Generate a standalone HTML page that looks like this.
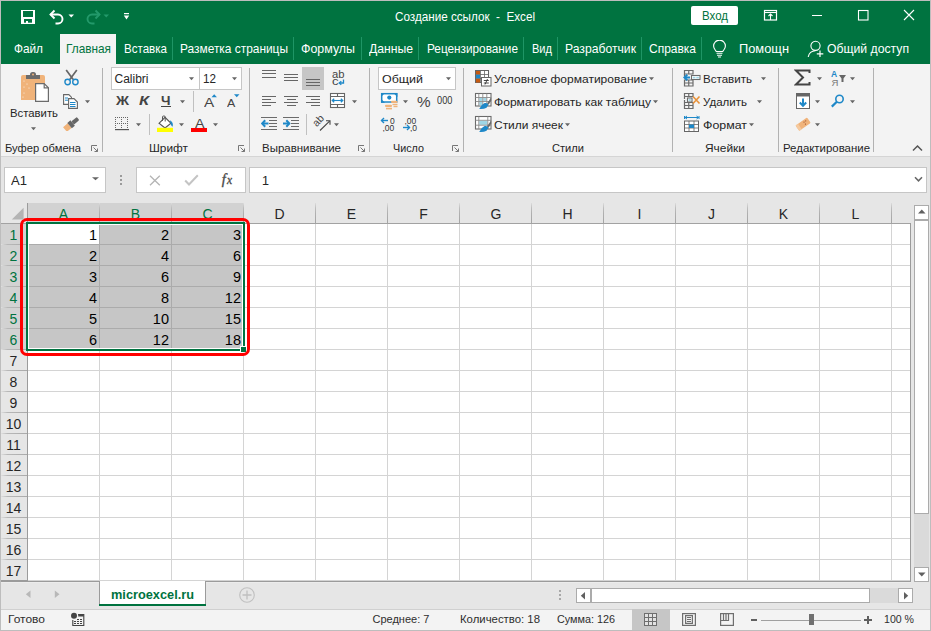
<!DOCTYPE html>
<html><head><meta charset="utf-8"><title>Excel</title>
<style>
html,body{margin:0;padding:0;}
body{width:931px;height:631px;position:relative;overflow:hidden;background:#e6e6e6;font-family:"Liberation Sans", sans-serif;}
body>div,body>span,body>svg{position:absolute;}
span{white-space:nowrap;}
</style></head><body>
<div style="left:0px;top:0px;width:931px;height:631px;background:#e6e6e6;"></div>
<div style="left:0px;top:0px;width:931px;height:1px;background:#bdbdbd;"></div>
<div style="left:1px;top:1px;width:929px;height:63px;background:#007340;"></div>
<div style="left:0px;top:0px;width:1px;height:631px;background:#bdbdbd;"></div>
<div style="left:930px;top:0px;width:1px;height:631px;background:#bdbdbd;"></div>
<div style="left:60px;top:34px;width:56px;height:30px;background:#f3f3f3;"></div>
<div style="left:1px;top:64px;width:929px;height:92px;background:#f3f3f3;"></div>
<div style="left:1px;top:156px;width:929px;height:1px;background:#d5d5d5;"></div>
<span style="left:394.50px;top:9px;font-size:13px;line-height:16px;color:#ffffff;font-weight:400;transform:scaleX(0.8985);transform-origin:0 0;">Создание ссылок&nbsp; - &nbsp;Excel</span>
<div style="left:691px;top:6px;width:47px;height:19px;background:#ffffff;border-radius:2px;"></div>
<span style="left:701.50px;top:8px;font-size:13px;line-height:16px;color:#007340;font-weight:400;transform:scaleX(0.8837);transform-origin:0 0;">Вход</span>
<span style="left:13.50px;top:41px;font-size:13px;line-height:16px;color:#ffffff;font-weight:400;transform:scaleX(0.9071);transform-origin:0 0;">Файл</span>
<span style="left:65.50px;top:41px;font-size:13px;line-height:16px;color:#007340;font-weight:400;transform:scaleX(0.9094);transform-origin:0 0;">Главная</span>
<span style="left:123.50px;top:41px;font-size:13px;line-height:16px;color:#ffffff;font-weight:400;transform:scaleX(0.8898);transform-origin:0 0;">Вставка</span>
<span style="left:179.50px;top:41px;font-size:13px;line-height:16px;color:#ffffff;font-weight:400;transform:scaleX(0.9157);transform-origin:0 0;">Разметка страницы</span>
<span style="left:300.50px;top:41px;font-size:13px;line-height:16px;color:#ffffff;font-weight:400;transform:scaleX(0.9544);transform-origin:0 0;">Формулы</span>
<span style="left:368.50px;top:41px;font-size:13px;line-height:16px;color:#ffffff;font-weight:400;transform:scaleX(0.9368);transform-origin:0 0;">Данные</span>
<span style="left:426.50px;top:41px;font-size:13px;line-height:16px;color:#ffffff;font-weight:400;transform:scaleX(0.9065);transform-origin:0 0;">Рецензирование</span>
<span style="left:531.50px;top:41px;font-size:13px;line-height:16px;color:#ffffff;font-weight:400;transform:scaleX(0.8499);transform-origin:0 0;">Вид</span>
<span style="left:564.50px;top:41px;font-size:13px;line-height:16px;color:#ffffff;font-weight:400;transform:scaleX(0.9365);transform-origin:0 0;">Разработчик</span>
<span style="left:648.50px;top:41px;font-size:13px;line-height:16px;color:#ffffff;font-weight:400;transform:scaleX(0.9216);transform-origin:0 0;">Справка</span>
<span style="left:738.50px;top:41px;font-size:13px;line-height:16px;color:#ffffff;font-weight:400;transform:scaleX(0.9877);transform-origin:0 0;">Помощн</span>
<span style="left:826.50px;top:41px;font-size:13px;line-height:16px;color:#ffffff;font-weight:400;transform:scaleX(0.9388);transform-origin:0 0;">Общий доступ</span>
<div style="left:172px;top:37px;width:1px;height:23px;background:#1f9565;"></div>
<div style="left:293px;top:37px;width:1px;height:23px;background:#1f9565;"></div>
<div style="left:361px;top:37px;width:1px;height:23px;background:#1f9565;"></div>
<div style="left:418px;top:37px;width:1px;height:23px;background:#1f9565;"></div>
<div style="left:523px;top:37px;width:1px;height:23px;background:#1f9565;"></div>
<div style="left:557px;top:37px;width:1px;height:23px;background:#1f9565;"></div>
<div style="left:641px;top:37px;width:1px;height:23px;background:#1f9565;"></div>
<div style="left:701px;top:37px;width:1px;height:23px;background:#1f9565;"></div>
<div style="left:102px;top:68px;width:1px;height:84px;background:#b2b2b2;"></div>
<div style="left:249px;top:68px;width:1px;height:84px;background:#b2b2b2;"></div>
<div style="left:369px;top:68px;width:1px;height:84px;background:#b2b2b2;"></div>
<div style="left:463px;top:68px;width:1px;height:84px;background:#b2b2b2;"></div>
<div style="left:672px;top:68px;width:1px;height:84px;background:#b2b2b2;"></div>
<div style="left:778px;top:68px;width:1px;height:84px;background:#b2b2b2;"></div>
<div style="left:873px;top:68px;width:1px;height:84px;background:#b2b2b2;"></div>
<span style="left:4.50px;top:142px;font-size:11px;line-height:13px;color:#262626;font-weight:400;transform:scaleX(1.0167);transform-origin:0 0;">Буфер обмена</span>
<span style="left:148.50px;top:142px;font-size:11px;line-height:13px;color:#262626;font-weight:400;transform:scaleX(1.0773);transform-origin:0 0;">Шрифт</span>
<span style="left:261.50px;top:142px;font-size:11px;line-height:13px;color:#262626;font-weight:400;transform:scaleX(1.0433);transform-origin:0 0;">Выравнивание</span>
<span style="left:392.50px;top:142px;font-size:11px;line-height:13px;color:#262626;font-weight:400;transform:scaleX(0.9798);transform-origin:0 0;">Число</span>
<span style="left:551.50px;top:142px;font-size:11px;line-height:13px;color:#262626;font-weight:400;transform:scaleX(1.0094);transform-origin:0 0;">Стили</span>
<span style="left:704.50px;top:142px;font-size:11px;line-height:13px;color:#262626;font-weight:400;transform:scaleX(1.0838);transform-origin:0 0;">Ячейки</span>
<span style="left:782.50px;top:142px;font-size:11px;line-height:13px;color:#262626;font-weight:400;transform:scaleX(1.0382);transform-origin:0 0;">Редактирование</span>
<span style="left:9.50px;top:106px;font-size:11.5px;line-height:14px;color:#262626;font-weight:400;transform:scaleX(0.9846);transform-origin:0 0;">Вставить</span>
<div style="left:111px;top:67px;width:89px;height:23px;box-sizing:border-box;border:1px solid #c6c6c6;background:#ffffff;"></div>
<div style="left:199px;top:67px;width:43px;height:23px;box-sizing:border-box;border:1px solid #c6c6c6;background:#ffffff;"></div>
<span style="left:114.50px;top:72px;font-size:12px;line-height:14px;color:#262626;font-weight:400;">Calibri</span>
<span style="left:202.50px;top:72px;font-size:12px;line-height:14px;color:#262626;font-weight:400;transform:scaleX(0.9731);transform-origin:0 0;">12</span>
<div style="left:378px;top:67px;width:78px;height:23px;box-sizing:border-box;border:1px solid #c6c6c6;background:#ffffff;"></div>
<span style="left:381.50px;top:72px;font-size:11.5px;line-height:14px;color:#262626;font-weight:400;transform:scaleX(1.0834);transform-origin:0 0;">Общий</span>
<span style="left:493.50px;top:73px;font-size:11px;line-height:13px;color:#262626;font-weight:400;transform:scaleX(1.0932);transform-origin:0 0;">Условное форматирование</span>
<span style="left:493.50px;top:96px;font-size:11px;line-height:13px;color:#262626;font-weight:400;transform:scaleX(1.0969);transform-origin:0 0;">Форматировать как таблицу</span>
<span style="left:493.50px;top:119px;font-size:11px;line-height:13px;color:#262626;font-weight:400;transform:scaleX(1.0869);transform-origin:0 0;">Стили ячеек</span>
<span style="left:702.50px;top:73px;font-size:11px;line-height:13px;color:#262626;font-weight:400;transform:scaleX(1.0506);transform-origin:0 0;">Вставить</span>
<span style="left:702.50px;top:96px;font-size:11px;line-height:13px;color:#262626;font-weight:400;transform:scaleX(1.0476);transform-origin:0 0;">Удалить</span>
<span style="left:702.50px;top:119px;font-size:11px;line-height:13px;color:#262626;font-weight:400;transform:scaleX(1.1259);transform-origin:0 0;">Формат</span>
<div style="left:4px;top:167px;width:102px;height:26px;box-sizing:border-box;border:1px solid #c6c6c6;background:#ffffff;"></div>
<span style="left:10.50px;top:173px;font-size:13px;line-height:16px;color:#262626;font-weight:400;transform:scaleX(1.0059);transform-origin:0 0;">A1</span>
<div style="left:136px;top:167px;width:110px;height:26px;box-sizing:border-box;border:1px solid #c6c6c6;background:#ffffff;"></div>
<div style="left:249px;top:167px;width:678px;height:26px;box-sizing:border-box;border:1px solid #c6c6c6;background:#ffffff;"></div>
<span style="left:261.50px;top:173px;font-size:13px;line-height:16px;color:#262626;font-weight:400;transform:scaleX(0.9676);transform-origin:0 0;">1</span>
<div style="left:1px;top:203px;width:910px;height:20px;background:#e6e6e6;"></div>
<div style="left:27px;top:203px;width:216px;height:20px;background:#d2d2d2;"></div>
<div style="left:1px;top:224px;width:26px;height:357px;background:#e6e6e6;"></div>
<div style="left:1px;top:224px;width:26px;height:126px;background:#d2d2d2;"></div>
<div style="left:28px;top:224px;width:882px;height:357px;background:#ffffff;"></div>
<div style="left:99px;top:224px;width:1px;height:357px;background:#d4d4d4;"></div>
<div style="left:99px;top:203px;width:1px;height:20px;background:linear-gradient(#dcdcdc, #bdbdbd 25%, #b0b0b0 50%, #a4a4a4);"></div>
<div style="left:171px;top:224px;width:1px;height:357px;background:#d4d4d4;"></div>
<div style="left:171px;top:203px;width:1px;height:20px;background:linear-gradient(#dcdcdc, #bdbdbd 25%, #b0b0b0 50%, #a4a4a4);"></div>
<div style="left:243px;top:224px;width:1px;height:357px;background:#d4d4d4;"></div>
<div style="left:243px;top:203px;width:1px;height:20px;background:linear-gradient(#dcdcdc, #bdbdbd 25%, #b0b0b0 50%, #a4a4a4);"></div>
<div style="left:315px;top:224px;width:1px;height:357px;background:#d4d4d4;"></div>
<div style="left:315px;top:203px;width:1px;height:20px;background:linear-gradient(#dcdcdc, #bdbdbd 25%, #b0b0b0 50%, #a4a4a4);"></div>
<div style="left:387px;top:224px;width:1px;height:357px;background:#d4d4d4;"></div>
<div style="left:387px;top:203px;width:1px;height:20px;background:linear-gradient(#dcdcdc, #bdbdbd 25%, #b0b0b0 50%, #a4a4a4);"></div>
<div style="left:459px;top:224px;width:1px;height:357px;background:#d4d4d4;"></div>
<div style="left:459px;top:203px;width:1px;height:20px;background:linear-gradient(#dcdcdc, #bdbdbd 25%, #b0b0b0 50%, #a4a4a4);"></div>
<div style="left:531px;top:224px;width:1px;height:357px;background:#d4d4d4;"></div>
<div style="left:531px;top:203px;width:1px;height:20px;background:linear-gradient(#dcdcdc, #bdbdbd 25%, #b0b0b0 50%, #a4a4a4);"></div>
<div style="left:603px;top:224px;width:1px;height:357px;background:#d4d4d4;"></div>
<div style="left:603px;top:203px;width:1px;height:20px;background:linear-gradient(#dcdcdc, #bdbdbd 25%, #b0b0b0 50%, #a4a4a4);"></div>
<div style="left:675px;top:224px;width:1px;height:357px;background:#d4d4d4;"></div>
<div style="left:675px;top:203px;width:1px;height:20px;background:linear-gradient(#dcdcdc, #bdbdbd 25%, #b0b0b0 50%, #a4a4a4);"></div>
<div style="left:747px;top:224px;width:1px;height:357px;background:#d4d4d4;"></div>
<div style="left:747px;top:203px;width:1px;height:20px;background:linear-gradient(#dcdcdc, #bdbdbd 25%, #b0b0b0 50%, #a4a4a4);"></div>
<div style="left:819px;top:224px;width:1px;height:357px;background:#d4d4d4;"></div>
<div style="left:819px;top:203px;width:1px;height:20px;background:linear-gradient(#dcdcdc, #bdbdbd 25%, #b0b0b0 50%, #a4a4a4);"></div>
<div style="left:891px;top:224px;width:1px;height:357px;background:#d4d4d4;"></div>
<div style="left:891px;top:203px;width:1px;height:20px;background:linear-gradient(#dcdcdc, #bdbdbd 25%, #b0b0b0 50%, #a4a4a4);"></div>
<div style="left:28px;top:244px;width:882px;height:1px;background:#d4d4d4;"></div>
<div style="left:1px;top:244px;width:26px;height:1px;background:linear-gradient(to right, #e0e0e0, #b8b8b8 25%, #aaaaaa);"></div>
<div style="left:28px;top:265px;width:882px;height:1px;background:#d4d4d4;"></div>
<div style="left:1px;top:265px;width:26px;height:1px;background:linear-gradient(to right, #e0e0e0, #b8b8b8 25%, #aaaaaa);"></div>
<div style="left:28px;top:286px;width:882px;height:1px;background:#d4d4d4;"></div>
<div style="left:1px;top:286px;width:26px;height:1px;background:linear-gradient(to right, #e0e0e0, #b8b8b8 25%, #aaaaaa);"></div>
<div style="left:28px;top:307px;width:882px;height:1px;background:#d4d4d4;"></div>
<div style="left:1px;top:307px;width:26px;height:1px;background:linear-gradient(to right, #e0e0e0, #b8b8b8 25%, #aaaaaa);"></div>
<div style="left:28px;top:328px;width:882px;height:1px;background:#d4d4d4;"></div>
<div style="left:1px;top:328px;width:26px;height:1px;background:linear-gradient(to right, #e0e0e0, #b8b8b8 25%, #aaaaaa);"></div>
<div style="left:28px;top:349px;width:882px;height:1px;background:#d4d4d4;"></div>
<div style="left:1px;top:349px;width:26px;height:1px;background:linear-gradient(to right, #e0e0e0, #b8b8b8 25%, #aaaaaa);"></div>
<div style="left:28px;top:370px;width:882px;height:1px;background:#d4d4d4;"></div>
<div style="left:1px;top:370px;width:26px;height:1px;background:linear-gradient(to right, #e0e0e0, #b8b8b8 25%, #aaaaaa);"></div>
<div style="left:28px;top:391px;width:882px;height:1px;background:#d4d4d4;"></div>
<div style="left:1px;top:391px;width:26px;height:1px;background:linear-gradient(to right, #e0e0e0, #b8b8b8 25%, #aaaaaa);"></div>
<div style="left:28px;top:412px;width:882px;height:1px;background:#d4d4d4;"></div>
<div style="left:1px;top:412px;width:26px;height:1px;background:linear-gradient(to right, #e0e0e0, #b8b8b8 25%, #aaaaaa);"></div>
<div style="left:28px;top:433px;width:882px;height:1px;background:#d4d4d4;"></div>
<div style="left:1px;top:433px;width:26px;height:1px;background:linear-gradient(to right, #e0e0e0, #b8b8b8 25%, #aaaaaa);"></div>
<div style="left:28px;top:454px;width:882px;height:1px;background:#d4d4d4;"></div>
<div style="left:1px;top:454px;width:26px;height:1px;background:linear-gradient(to right, #e0e0e0, #b8b8b8 25%, #aaaaaa);"></div>
<div style="left:28px;top:475px;width:882px;height:1px;background:#d4d4d4;"></div>
<div style="left:1px;top:475px;width:26px;height:1px;background:linear-gradient(to right, #e0e0e0, #b8b8b8 25%, #aaaaaa);"></div>
<div style="left:28px;top:496px;width:882px;height:1px;background:#d4d4d4;"></div>
<div style="left:1px;top:496px;width:26px;height:1px;background:linear-gradient(to right, #e0e0e0, #b8b8b8 25%, #aaaaaa);"></div>
<div style="left:28px;top:517px;width:882px;height:1px;background:#d4d4d4;"></div>
<div style="left:1px;top:517px;width:26px;height:1px;background:linear-gradient(to right, #e0e0e0, #b8b8b8 25%, #aaaaaa);"></div>
<div style="left:28px;top:538px;width:882px;height:1px;background:#d4d4d4;"></div>
<div style="left:1px;top:538px;width:26px;height:1px;background:linear-gradient(to right, #e0e0e0, #b8b8b8 25%, #aaaaaa);"></div>
<div style="left:28px;top:559px;width:882px;height:1px;background:#d4d4d4;"></div>
<div style="left:1px;top:559px;width:26px;height:1px;background:linear-gradient(to right, #e0e0e0, #b8b8b8 25%, #aaaaaa);"></div>
<div style="left:28px;top:580px;width:882px;height:1px;background:#d4d4d4;"></div>
<div style="left:1px;top:580px;width:26px;height:1px;background:linear-gradient(to right, #e0e0e0, #b8b8b8 25%, #aaaaaa);"></div>
<div style="left:1px;top:223px;width:910px;height:1px;background:#a2a2a2;"></div>
<div style="left:27px;top:203px;width:1px;height:378px;background:#9b9b9b;"></div>
<div style="left:1px;top:580px;width:27px;height:1px;background:#9b9b9b;"></div>
<div style="left:910px;top:223px;width:1px;height:359px;background:#9b9b9b;"></div>
<div style="left:26px;top:222px;width:219px;height:129px;background:#ffffff;"></div>
<div style="left:29px;top:225px;width:213px;height:123px;background:#c6c6c6;"></div>
<div style="left:29px;top:224px;width:70px;height:20px;background:#ffffff;"></div>
<div style="left:29px;top:244px;width:213px;height:1px;background:#ababab;"></div>
<div style="left:29px;top:265px;width:213px;height:1px;background:#ababab;"></div>
<div style="left:29px;top:286px;width:213px;height:1px;background:#ababab;"></div>
<div style="left:29px;top:307px;width:213px;height:1px;background:#ababab;"></div>
<div style="left:29px;top:328px;width:213px;height:1px;background:#ababab;"></div>
<div style="left:99px;top:225px;width:1px;height:123px;background:#ababab;"></div>
<div style="left:171px;top:225px;width:1px;height:123px;background:#ababab;"></div>
<span style="left:58.50px;top:206px;font-size:14px;line-height:17px;color:#007340;font-weight:400;width:10px;text-align:center;">A</span>
<span style="left:130.50px;top:206px;font-size:14px;line-height:17px;color:#007340;font-weight:400;width:10px;text-align:center;">B</span>
<span style="left:202.50px;top:206px;font-size:14px;line-height:17px;color:#007340;font-weight:400;width:10px;text-align:center;">C</span>
<span style="left:274.50px;top:206px;font-size:14px;line-height:17px;color:#262626;font-weight:400;width:10px;text-align:center;">D</span>
<span style="left:346.50px;top:206px;font-size:14px;line-height:17px;color:#262626;font-weight:400;width:10px;text-align:center;">E</span>
<span style="left:418.50px;top:206px;font-size:14px;line-height:17px;color:#262626;font-weight:400;width:10px;text-align:center;">F</span>
<span style="left:490.50px;top:206px;font-size:14px;line-height:17px;color:#262626;font-weight:400;width:10px;text-align:center;">G</span>
<span style="left:562.50px;top:206px;font-size:14px;line-height:17px;color:#262626;font-weight:400;width:10px;text-align:center;">H</span>
<span style="left:634.50px;top:206px;font-size:14px;line-height:17px;color:#262626;font-weight:400;width:10px;text-align:center;">I</span>
<span style="left:706.50px;top:206px;font-size:14px;line-height:17px;color:#262626;font-weight:400;width:10px;text-align:center;">J</span>
<span style="left:778.50px;top:206px;font-size:14px;line-height:17px;color:#262626;font-weight:400;width:10px;text-align:center;">K</span>
<span style="left:850.50px;top:206px;font-size:14px;line-height:17px;color:#262626;font-weight:400;width:10px;text-align:center;">L</span>
<span style="left:9.50px;top:227px;font-size:14px;line-height:17px;color:#007340;font-weight:400;width:8px;text-align:center;">1</span>
<span style="left:9.50px;top:248px;font-size:14px;line-height:17px;color:#007340;font-weight:400;width:8px;text-align:center;">2</span>
<span style="left:9.50px;top:269px;font-size:14px;line-height:17px;color:#007340;font-weight:400;width:8px;text-align:center;">3</span>
<span style="left:9.50px;top:290px;font-size:14px;line-height:17px;color:#007340;font-weight:400;width:8px;text-align:center;">4</span>
<span style="left:9.50px;top:311px;font-size:14px;line-height:17px;color:#007340;font-weight:400;width:8px;text-align:center;">5</span>
<span style="left:9.50px;top:332px;font-size:14px;line-height:17px;color:#007340;font-weight:400;width:8px;text-align:center;">6</span>
<span style="left:9.50px;top:353px;font-size:14px;line-height:17px;color:#262626;font-weight:400;width:8px;text-align:center;">7</span>
<span style="left:9.50px;top:374px;font-size:14px;line-height:17px;color:#262626;font-weight:400;width:8px;text-align:center;">8</span>
<span style="left:9.50px;top:395px;font-size:14px;line-height:17px;color:#262626;font-weight:400;width:8px;text-align:center;">9</span>
<span style="left:5.50px;top:416px;font-size:14px;line-height:17px;color:#262626;font-weight:400;width:16px;text-align:center;">10</span>
<span style="left:5.50px;top:437px;font-size:14px;line-height:17px;color:#262626;font-weight:400;width:16px;text-align:center;">11</span>
<span style="left:5.50px;top:458px;font-size:14px;line-height:17px;color:#262626;font-weight:400;width:16px;text-align:center;">12</span>
<span style="left:5.50px;top:479px;font-size:14px;line-height:17px;color:#262626;font-weight:400;width:16px;text-align:center;">13</span>
<span style="left:5.50px;top:500px;font-size:14px;line-height:17px;color:#262626;font-weight:400;width:16px;text-align:center;">14</span>
<span style="left:5.50px;top:521px;font-size:14px;line-height:17px;color:#262626;font-weight:400;width:16px;text-align:center;">15</span>
<span style="left:5.50px;top:542px;font-size:14px;line-height:17px;color:#262626;font-weight:400;width:16px;text-align:center;">16</span>
<span style="left:5.50px;top:563px;font-size:14px;line-height:17px;color:#262626;font-weight:400;width:16px;text-align:center;">17</span>
<span style="left:67.00px;top:227px;font-size:14.5px;line-height:17px;color:#000000;font-weight:400;width:30px;text-align:right;">1</span>
<span style="left:139.00px;top:227px;font-size:14.5px;line-height:17px;color:#000000;font-weight:400;width:30px;text-align:right;">2</span>
<span style="left:211.00px;top:227px;font-size:14.5px;line-height:17px;color:#000000;font-weight:400;width:30px;text-align:right;">3</span>
<span style="left:67.00px;top:248px;font-size:14.5px;line-height:17px;color:#000000;font-weight:400;width:30px;text-align:right;">2</span>
<span style="left:139.00px;top:248px;font-size:14.5px;line-height:17px;color:#000000;font-weight:400;width:30px;text-align:right;">4</span>
<span style="left:211.00px;top:248px;font-size:14.5px;line-height:17px;color:#000000;font-weight:400;width:30px;text-align:right;">6</span>
<span style="left:67.00px;top:269px;font-size:14.5px;line-height:17px;color:#000000;font-weight:400;width:30px;text-align:right;">3</span>
<span style="left:139.00px;top:269px;font-size:14.5px;line-height:17px;color:#000000;font-weight:400;width:30px;text-align:right;">6</span>
<span style="left:211.00px;top:269px;font-size:14.5px;line-height:17px;color:#000000;font-weight:400;width:30px;text-align:right;">9</span>
<span style="left:67.00px;top:290px;font-size:14.5px;line-height:17px;color:#000000;font-weight:400;width:30px;text-align:right;">4</span>
<span style="left:139.00px;top:290px;font-size:14.5px;line-height:17px;color:#000000;font-weight:400;width:30px;text-align:right;">8</span>
<span style="left:211.00px;top:290px;font-size:14.5px;line-height:17px;color:#000000;font-weight:400;width:30px;text-align:right;">12</span>
<span style="left:67.00px;top:311px;font-size:14.5px;line-height:17px;color:#000000;font-weight:400;width:30px;text-align:right;">5</span>
<span style="left:139.00px;top:311px;font-size:14.5px;line-height:17px;color:#000000;font-weight:400;width:30px;text-align:right;">10</span>
<span style="left:211.00px;top:311px;font-size:14.5px;line-height:17px;color:#000000;font-weight:400;width:30px;text-align:right;">15</span>
<span style="left:67.00px;top:332px;font-size:14.5px;line-height:17px;color:#000000;font-weight:400;width:30px;text-align:right;">6</span>
<span style="left:139.00px;top:332px;font-size:14.5px;line-height:17px;color:#000000;font-weight:400;width:30px;text-align:right;">12</span>
<span style="left:211.00px;top:332px;font-size:14.5px;line-height:17px;color:#000000;font-weight:400;width:30px;text-align:right;">18</span>
<div style="left:26px;top:222px;width:219px;height:129px;box-sizing:border-box;border:2px solid #007340;background:transparent;"></div>
<div style="left:240px;top:346px;width:7px;height:7px;background:#ffffff;"></div>
<div style="left:241px;top:347px;width:5px;height:5px;background:#007340;"></div>
<div style="left:20px;top:218px;width:230px;height:138px;box-sizing:border-box;border:3px solid #ff0000;background:transparent;border-radius:7px;"></div>
<div style="left:911px;top:203px;width:19px;height:378px;background:#e6e6e6;"></div>
<div style="left:914px;top:205px;width:15px;height:15px;box-sizing:border-box;border:1px solid #ababab;background:#ffffff;"></div>
<div style="left:914px;top:220px;width:15px;height:294px;box-sizing:border-box;border:1px solid #ababab;background:#ffffff;"></div>
<div style="left:914px;top:514px;width:15px;height:53px;background:#dadada;"></div>
<div style="left:914px;top:567px;width:15px;height:15px;box-sizing:border-box;border:1px solid #ababab;background:#ffffff;"></div>
<div style="left:1px;top:582px;width:929px;height:27px;background:#e6e6e6;"></div>
<div style="left:1px;top:581px;width:910px;height:1px;background:#9b9b9b;"></div>
<div style="left:1px;top:582px;width:910px;height:1px;background:#ececec;"></div>
<div style="left:1px;top:609px;width:929px;height:1px;background:#d0d0d0;"></div>
<div style="left:99px;top:581px;width:107px;height:24px;background:#ffffff;border-left:1px solid #9b9b9b;border-right:1px solid #9b9b9b;box-sizing:border-box;"></div>
<div style="left:99px;top:604px;width:107px;height:2px;background:#007340;"></div>
<span style="left:110.50px;top:587px;font-size:13.5px;line-height:16px;color:#007340;font-weight:700;transform:scaleX(0.9454);transform-origin:0 0;">microexcel.ru</span>
<div style="left:576px;top:588px;width:15px;height:15px;box-sizing:border-box;border:1px solid #ababab;background:#ffffff;"></div>
<div style="left:591px;top:588px;width:279px;height:15px;box-sizing:border-box;border:1px solid #ababab;background:#ffffff;"></div>
<div style="left:870px;top:588px;width:28px;height:15px;background:#dadada;"></div>
<div style="left:898px;top:588px;width:15px;height:15px;box-sizing:border-box;border:1px solid #ababab;background:#ffffff;"></div>
<div style="left:1px;top:610px;width:929px;height:20px;background:#f3f3f3;"></div>
<div style="left:0px;top:630px;width:931px;height:1px;background:#bdbdbd;"></div>
<span style="left:7.50px;top:613px;font-size:11px;line-height:13px;color:#2e2e2e;font-weight:400;transform:scaleX(1.0892);transform-origin:0 0;">Готово</span>
<span style="left:372.50px;top:613px;font-size:11px;line-height:13px;color:#2e2e2e;font-weight:400;">Среднее: 7</span>
<span style="left:459.50px;top:613px;font-size:11px;line-height:13px;color:#2e2e2e;font-weight:400;transform:scaleX(1.0333);transform-origin:0 0;">Количество: 18</span>
<span style="left:556.50px;top:613px;font-size:11px;line-height:13px;color:#2e2e2e;font-weight:400;transform:scaleX(0.9825);transform-origin:0 0;">Сумма: 126</span>
<span style="left:883.50px;top:613px;font-size:11px;line-height:13px;color:#2e2e2e;font-weight:400;transform:scaleX(0.9614);transform-origin:0 0;">100 %</span>
<div style="left:632px;top:609px;width:38px;height:21px;background:#c6c6c6;"></div>
<svg style="left:21px;top:10px;" width="14" height="14" viewBox="0 0 14 14"><rect x="0" y="0" width="14" height="14" fill="#ffffff"/><rect x="2" y="1" width="10" height="6" fill="#007340"/><rect x="3" y="9" width="8" height="3.7" fill="#007340"/><rect x="5" y="11" width="2" height="2" fill="#ffffff"/></svg>
<svg style="left:48px;top:9px;" width="18" height="16" viewBox="0 0 18 16"><path d="M2.5 5.5 H10 A4.5 4.5 0 0 1 10 14.5 H7.5" fill="none" stroke="#ffffff" stroke-width="1.9"/><path d="M6.5 1.5 L2.5 5.5 L6.5 9.5" fill="none" stroke="#ffffff" stroke-width="1.9"/></svg>
<svg style="left:68px;top:14px;" width="7" height="4" viewBox="0 0 7 4"><path d="M0.5 0.5 H6 L3.25 3.5 Z" fill="#ffffff"/></svg>
<svg style="left:84px;top:9px;" width="18" height="16" viewBox="0 0 18 16"><path d="M15.5 5.5 H8 A4.5 4.5 0 0 0 8 14.5 H10.5" fill="none" stroke="#23996a" stroke-width="1.9"/><path d="M11.5 1.5 L15.5 5.5 L11.5 9.5" fill="none" stroke="#23996a" stroke-width="1.9"/></svg>
<svg style="left:103px;top:14px;" width="7" height="4" viewBox="0 0 7 4"><path d="M0.5 0.5 H6 L3.25 3.5 Z" fill="#23996a"/></svg>
<svg style="left:123px;top:12px;" width="7" height="9" viewBox="0 0 7 9"><rect x="1" y="1" width="5" height="1.2" fill="#ffffff"/><path d="M0.8 3.6 H6.2 L3.5 7.4 Z" fill="#ffffff"/></svg>
<svg style="left:763px;top:9px;" width="15" height="12" viewBox="0 0 15 12"><rect x="1.5" y="1.5" width="12" height="9.5" fill="none" stroke="#ffffff" stroke-width="1.2"/><path d="M1.5 3.5 H13.5" stroke="#ffffff" stroke-width="1.1"/><path d="M7.5 5 V11" stroke="#ffffff" stroke-width="1.1"/><path d="M5.5 7 L7.5 5 L9.5 7" fill="none" stroke="#ffffff" stroke-width="1.1"/></svg>
<div style="left:812px;top:15px;width:10px;height:1px;background:#ffffff;"></div>
<svg style="left:857px;top:9px;" width="12" height="12" viewBox="0 0 12 12"><rect x="1.5" y="1.5" width="9.5" height="9.5" fill="none" stroke="#ffffff" stroke-width="1.1"/></svg>
<svg style="left:903px;top:9px;" width="12" height="12" viewBox="0 0 12 12"><path d="M1 1 L11 11 M11 1 L1 11" stroke="#ffffff" stroke-width="1.1"/></svg>
<svg style="left:712px;top:40px;" width="15" height="18" viewBox="0 0 15 18"><path d="M4.2 11.5 C3 9.5 1.6 8.5 1.6 6 A5.9 5.9 0 0 1 13.4 6 C13.4 8.5 12 9.5 10.8 11.5 Z" fill="none" stroke="#ffffff" stroke-width="1.1"/><path d="M4.5 13.2 H10.5 M5 15.2 H10 M6 17 H9" stroke="#ffffff" stroke-width="1.1"/></svg>
<svg style="left:807px;top:40px;" width="18" height="18" viewBox="0 0 18 18"><circle cx="8.5" cy="5.8" r="4.6" fill="none" stroke="#ffffff" stroke-width="1.1"/><path d="M1.2 17 C2 13 4.5 11 8.5 10.8" fill="none" stroke="#ffffff" stroke-width="1.1"/><path d="M13 10.5 V17 M9.8 13.8 H16.3" stroke="#ffffff" stroke-width="1.2"/></svg>
<svg style="left:20px;top:71px;" width="31" height="32" viewBox="0 0 31 32"><path d="M1 6 Q1 4 3 4 H23 Q25 4 25 6 V29 H1 Z" fill="#f0b37a"/><path d="M6 4 H20 V7.5 Q20 8 19.5 8 H6.5 Q6 8 6 7.5 Z" fill="#6b6b6b"/><rect x="10" y="1" width="6" height="5" rx="2.5" fill="#6b6b6b"/><circle cx="13" cy="3.5" r="1" fill="#f0b37a"/><path d="M15.6 12.6 H24.2 L28.4 16.8 V30.4 H15.6 Z" fill="#ffffff" stroke="#6b6b6b" stroke-width="1.2"/><path d="M24.2 12.6 V16.8 H28.4" fill="none" stroke="#6b6b6b" stroke-width="1.2"/><circle cx="4" cy="10" r="0.5" fill="#fff"/><circle cx="7" cy="13" r="0.5" fill="#fff"/><circle cx="4" cy="16" r="0.5" fill="#fff"/><circle cx="9" cy="17" r="0.5" fill="#fff"/><circle cx="4" cy="22" r="0.5" fill="#fff"/><circle cx="3" cy="26" r="0.5" fill="#fff"/></svg>
<svg style="left:31px;top:127px;" width="5" height="4" viewBox="0 0 5 4"><path d="M0 0.3 H5 L2.5 3.2 Z" fill="#666666"/></svg>
<svg style="left:63px;top:69px;" width="17" height="17" viewBox="0 0 17 17"><path d="M3.2 1 L10.2 10.5 M13.8 1 L6.8 10.5" stroke="#666666" stroke-width="1.7"/><circle cx="4.6" cy="13" r="2.7" fill="none" stroke="#1e88c8" stroke-width="1.4"/><circle cx="12.4" cy="13" r="2.7" fill="none" stroke="#1e88c8" stroke-width="1.4"/></svg>
<svg style="left:62px;top:93px;" width="17" height="16" viewBox="0 0 17 16"><path d="M1.6 1.6 H6.8 L9.4 4.2 V11.4 H1.6 Z" fill="#fff" stroke="#666666" stroke-width="1.1"/><path d="M6.6 5.6 H12 L15.4 9 V15.4 H6.6 Z" fill="#fff" stroke="#666666" stroke-width="1.1"/><path d="M3 5 H6 M3 7.2 H6 M8 9.5 H13.5 M8 11.5 H13.5 M8 13.5 H13.5" stroke="#1e88c8" stroke-width="1"/></svg>
<svg style="left:85px;top:100px;" width="5" height="4" viewBox="0 0 5 4"><path d="M0 0.3 H5 L2.5 3.2 Z" fill="#666666"/></svg>
<svg style="left:63px;top:116px;" width="17" height="16" viewBox="0 0 17 16"><g transform="rotate(-40 8.5 8)"><path d="M0 5 H6 V11 H2 Q0 11 0 9 Z" fill="#f0b37a"/><rect x="6" y="4.5" width="4" height="7" fill="#666666"/><rect x="10" y="6" width="7" height="4" rx="1" fill="#666666"/></g></svg>
<span style="left:115.50px;top:94px;font-size:12.5px;line-height:15px;color:#444444;font-weight:700;transform:scaleX(1.1492);transform-origin:0 0;">Ж</span>
<span style="left:138.50px;top:94px;font-size:12.5px;line-height:15px;color:#444444;font-weight:700;transform:scaleX(1.3088);transform-origin:0 0;font-style:italic;">К</span>
<span style="left:161.00px;top:94px;font-size:12.5px;line-height:15px;color:#444444;font-weight:700;transform:scaleX(1.0799);transform-origin:0 0;">Ч</span>
<div style="left:161px;top:106px;width:10px;height:1px;background:#444444;"></div>
<svg style="left:180px;top:100px;" width="5" height="4" viewBox="0 0 5 4"><path d="M0 0.3 H5 L2.5 3.2 Z" fill="#666666"/></svg>
<div style="left:193px;top:91px;width:1px;height:21px;background:#c0c0c0;"></div>
<span style="left:204.00px;top:96px;font-size:12.5px;line-height:15px;color:#444444;font-weight:400;transform:scaleX(1.2225);transform-origin:0 0;">A</span>
<svg style="left:211px;top:94px;" width="7" height="4" viewBox="0 0 7 4"><path d="M0.5 3.2 L3.2 0.3 L5.9 3.2 Z" fill="#1e88c8"/></svg>
<span style="left:226.50px;top:97px;font-size:10.5px;line-height:13px;color:#444444;font-weight:400;transform:scaleX(1.1831);transform-origin:0 0;">A</span>
<svg style="left:234px;top:94px;" width="6" height="4" viewBox="0 0 6 4"><path d="M0 0.3 H5.5 L2.75 3.2 Z" fill="#1e88c8"/></svg>
<svg style="left:114px;top:116px;" width="15" height="15" viewBox="0 0 15 15"><rect x="1" y="1" width="1" height="1" fill="#666"/><rect x="1" y="3" width="1" height="1" fill="#666"/><rect x="1" y="5" width="1" height="1" fill="#666"/><rect x="1" y="7" width="1" height="1" fill="#666"/><rect x="1" y="9" width="1" height="1" fill="#666"/><rect x="1" y="11" width="1" height="1" fill="#666"/><rect x="3" y="1" width="1" height="1" fill="#666"/><rect x="3" y="7" width="1" height="1" fill="#666"/><rect x="5" y="1" width="1" height="1" fill="#666"/><rect x="5" y="7" width="1" height="1" fill="#666"/><rect x="7" y="1" width="1" height="1" fill="#666"/><rect x="7" y="3" width="1" height="1" fill="#666"/><rect x="7" y="5" width="1" height="1" fill="#666"/><rect x="7" y="7" width="1" height="1" fill="#666"/><rect x="7" y="9" width="1" height="1" fill="#666"/><rect x="7" y="11" width="1" height="1" fill="#666"/><rect x="9" y="1" width="1" height="1" fill="#666"/><rect x="9" y="7" width="1" height="1" fill="#666"/><rect x="11" y="1" width="1" height="1" fill="#666"/><rect x="11" y="7" width="1" height="1" fill="#666"/><rect x="13" y="1" width="1" height="1" fill="#666"/><rect x="13" y="3" width="1" height="1" fill="#666"/><rect x="13" y="5" width="1" height="1" fill="#666"/><rect x="13" y="7" width="1" height="1" fill="#666"/><rect x="13" y="9" width="1" height="1" fill="#666"/><rect x="13" y="11" width="1" height="1" fill="#666"/><rect x="1" y="13" width="14" height="1.2" fill="#555"/></svg>
<svg style="left:136px;top:123px;" width="5" height="4" viewBox="0 0 5 4"><path d="M0 0.3 H5 L2.5 3.2 Z" fill="#666666"/></svg>
<div style="left:149px;top:114px;width:1px;height:21px;background:#c0c0c0;"></div>
<svg style="left:157px;top:115px;" width="17" height="18" viewBox="0 0 17 18"><path d="M2 8.3 L8 2.3 L14 8.3 L8 13 Z" fill="#fff" stroke="#555" stroke-width="1.1"/><path d="M5.5 6 V2 Q5.5 1 6.5 1 H7.2 Q8.2 1 8.2 2 V6.5" fill="none" stroke="#555" stroke-width="1"/><path d="M13 5.2 Q16.8 7.5 15.6 11.8 Q13.4 10.5 13 5.2 Z" fill="#1e88c8"/><rect x="0" y="12.8" width="16" height="4.2" fill="#ffff00"/></svg>
<svg style="left:179px;top:123px;" width="5" height="4" viewBox="0 0 5 4"><path d="M0 0.3 H5 L2.5 3.2 Z" fill="#666666"/></svg>
<span style="left:194.50px;top:116px;font-size:13px;line-height:16px;color:#444444;font-weight:400;transform:scaleX(1.0955);transform-origin:0 0;">A</span>
<div style="left:191px;top:128px;width:16px;height:4px;background:#ff0000;"></div>
<svg style="left:213px;top:123px;" width="5" height="4" viewBox="0 0 5 4"><path d="M0 0.3 H5 L2.5 3.2 Z" fill="#666666"/></svg>
<svg style="left:189px;top:77px;" width="5" height="4" viewBox="0 0 5 4"><path d="M0 0.3 H5 L2.5 3.2 Z" fill="#666666"/></svg>
<svg style="left:232px;top:77px;" width="5" height="4" viewBox="0 0 5 4"><path d="M0 0.3 H5 L2.5 3.2 Z" fill="#666666"/></svg>
<svg style="left:446px;top:77px;" width="5" height="4" viewBox="0 0 5 4"><path d="M0 0.3 H5 L2.5 3.2 Z" fill="#666666"/></svg>
<div style="left:262px;top:70px;width:14px;height:1px;background:#666666;"></div>
<div style="left:262px;top:73px;width:14px;height:1px;background:#666666;"></div>
<div style="left:262px;top:77px;width:14px;height:1px;background:#666666;"></div>
<div style="left:284px;top:74px;width:14px;height:1px;background:#666666;"></div>
<div style="left:284px;top:77px;width:14px;height:1px;background:#666666;"></div>
<div style="left:284px;top:80px;width:14px;height:1px;background:#666666;"></div>
<div style="left:302px;top:67px;width:22px;height:23px;background:#c6c6c6;"></div>
<div style="left:306px;top:79px;width:14px;height:1px;background:#666666;"></div>
<div style="left:306px;top:82px;width:14px;height:1px;background:#666666;"></div>
<div style="left:306px;top:85px;width:14px;height:1px;background:#666666;"></div>
<span style="left:331.50px;top:67px;font-size:11.5px;line-height:14px;color:#444444;font-weight:400;transform:scaleX(0.9768);transform-origin:0 0;">ab</span>
<span style="left:331.50px;top:74px;font-size:11.5px;line-height:14px;color:#444444;font-weight:400;transform:scaleX(1.1304);transform-origin:0 0;">c</span>
<svg style="left:338px;top:79px;" width="7" height="7" viewBox="0 0 7 7"><path d="M5.5 0.5 V4 H1.8" fill="none" stroke="#1e88c8" stroke-width="1.3"/><path d="M3.3 2.3 L1.2 4 L3.3 5.7" fill="none" stroke="#1e88c8" stroke-width="1.3"/></svg>
<div style="left:262px;top:96px;width:14px;height:1px;background:#666666;"></div>
<div style="left:262px;top:99px;width:9px;height:1px;background:#666666;"></div>
<div style="left:262px;top:102px;width:14px;height:1px;background:#666666;"></div>
<div style="left:262px;top:105px;width:9px;height:1px;background:#666666;"></div>
<div style="left:284px;top:96px;width:14px;height:1px;background:#666666;"></div>
<div style="left:286.5px;top:99px;width:9.0px;height:1px;background:#666666;"></div>
<div style="left:284px;top:102px;width:14px;height:1px;background:#666666;"></div>
<div style="left:286.5px;top:105px;width:9.0px;height:1px;background:#666666;"></div>
<div style="left:306px;top:96px;width:14px;height:1px;background:#666666;"></div>
<div style="left:311px;top:99px;width:9px;height:1px;background:#666666;"></div>
<div style="left:306px;top:102px;width:14px;height:1px;background:#666666;"></div>
<div style="left:311px;top:105px;width:9px;height:1px;background:#666666;"></div>
<svg style="left:329px;top:92px;" width="17" height="17" viewBox="0 0 17 17"><rect x="1.5" y="1.5" width="14" height="14" fill="#fff" stroke="#666666" stroke-width="1.1"/><path d="M1.5 4.5 H15.5 M1.5 12.5 H15.5 M8.5 1.5 V4.5 M8.5 12.5 V15.5" stroke="#666666" stroke-width="1.1"/><path d="M3.5 8.5 H13.5" stroke="#1e88c8" stroke-width="1.1"/><path d="M5.2 6.8 L3.3 8.5 L5.2 10.2 M11.8 6.8 L13.7 8.5 L11.8 10.2" fill="none" stroke="#1e88c8" stroke-width="1.3"/></svg>
<svg style="left:352px;top:100px;" width="5" height="4" viewBox="0 0 5 4"><path d="M0 0.3 H5 L2.5 3.2 Z" fill="#666666"/></svg>
<div style="left:261px;top:117px;width:16px;height:1px;background:#6b6b6b;"></div>
<div style="left:261px;top:129px;width:16px;height:1px;background:#6b6b6b;"></div>
<div style="left:269px;top:120px;width:8px;height:1px;background:#6b6b6b;"></div>
<div style="left:269px;top:123px;width:8px;height:1px;background:#6b6b6b;"></div>
<div style="left:269px;top:126px;width:8px;height:1px;background:#6b6b6b;"></div>
<div style="left:283px;top:117px;width:16px;height:1px;background:#6b6b6b;"></div>
<div style="left:283px;top:129px;width:16px;height:1px;background:#6b6b6b;"></div>
<div style="left:291px;top:120px;width:8px;height:1px;background:#6b6b6b;"></div>
<div style="left:291px;top:123px;width:8px;height:1px;background:#6b6b6b;"></div>
<div style="left:291px;top:126px;width:8px;height:1px;background:#6b6b6b;"></div>
<svg style="left:261px;top:119px;" width="8" height="9" viewBox="0 0 8 9"><path d="M1.2 4.5 H7.5" stroke="#1e88c8" stroke-width="2"/><path d="M4.2 1.3 L1.2 4.5 L4.2 7.7" fill="none" stroke="#1e88c8" stroke-width="2"/></svg>
<svg style="left:283px;top:119px;" width="8" height="9" viewBox="0 0 8 9"><path d="M0 4.5 H6.3" stroke="#1e88c8" stroke-width="2"/><path d="M3.3 1.3 L6.3 4.5 L3.3 7.7" fill="none" stroke="#1e88c8" stroke-width="2"/></svg>
<div style="left:306px;top:114px;width:1px;height:21px;background:#c0c0c0;"></div>
<svg style="left:312px;top:114px;" width="20" height="19" viewBox="0 0 20 19"><text x="0" y="0" transform="translate(4.8 13.2) rotate(-47)" font-family="Liberation Sans" font-size="10.5" fill="#444">ab</text><path d="M8 16.5 L17.6 7.2" stroke="#444" stroke-width="1.1"/><path d="M14 6.8 H18 V10.8" fill="none" stroke="#444" stroke-width="1.1"/></svg>
<svg style="left:334px;top:123px;" width="5" height="4" viewBox="0 0 5 4"><path d="M0 0.3 H5 L2.5 3.2 Z" fill="#666666"/></svg>
<svg style="left:380px;top:92px;" width="18" height="18" viewBox="0 0 18 18"><rect x="1.7" y="1.7" width="15" height="8.3" fill="#fff" stroke="#1e88c8" stroke-width="1.5"/><path d="M1 1 H5 L1 5 Z M17.4 1 H13.4 L17.4 5 Z M1 10.7 H5 L1 6.7 Z" fill="#1e88c8"/><circle cx="9.3" cy="5.6" r="2.1" fill="#1e88c8"/><rect x="11" y="8.8" width="6.5" height="2.2" rx="1" fill="#f0b37a"/><rect x="12.5" y="11.8" width="5" height="1.4" fill="#f0b37a"/><rect x="13.5" y="13.8" width="4" height="1.4" fill="#f0b37a"/><rect x="5" y="12.8" width="7" height="2.2" rx="1" fill="#f0b37a"/><rect x="6" y="15.8" width="6" height="1.6" fill="#f0b37a"/></svg>
<svg style="left:403px;top:100px;" width="5" height="4" viewBox="0 0 5 4"><path d="M0 0.3 H5 L2.5 3.2 Z" fill="#666666"/></svg>
<span style="left:416.70px;top:94px;font-size:14.5px;line-height:17px;color:#444444;font-weight:400;transform:scaleX(1.0538);transform-origin:0 0;">%</span>
<span style="left:437.30px;top:95px;font-size:10px;line-height:12px;color:#333333;font-weight:400;transform:scaleX(0.9228);transform-origin:0 0;">000</span>
<svg style="left:380px;top:116px;" width="17" height="16" viewBox="0 0 17 16"><path d="M1.5 4.5 H8" stroke="#1e88c8" stroke-width="1.4"/><path d="M4 2 L1.5 4.5 L4 7" fill="none" stroke="#1e88c8" stroke-width="1.4"/><text x="10" y="7.5" font-family="Liberation Sans" font-size="8.5" fill="#333">0</text><text x="2.5" y="15" font-family="Liberation Sans" font-size="8.5" fill="#333">,00</text></svg>
<svg style="left:402px;top:116px;" width="17" height="16" viewBox="0 0 17 16"><text x="2.5" y="7.5" font-family="Liberation Sans" font-size="8.5" fill="#333">,00</text><path d="M1 11.5 H7.5" stroke="#1e88c8" stroke-width="1.4"/><path d="M5 9 L7.5 11.5 L5 14" fill="none" stroke="#1e88c8" stroke-width="1.4"/><text x="8" y="15" font-family="Liberation Sans" font-size="8.5" fill="#333">,0</text></svg>
<svg style="left:474px;top:69px;" width="18" height="18" viewBox="0 0 18 18"><rect x="1.5" y="1.5" width="13" height="12" fill="#fff" stroke="#666666" stroke-width="1"/><rect x="2" y="2" width="4" height="3.5" fill="#c55a11"/><rect x="2" y="6" width="4" height="3.5" fill="#1e88c8"/><rect x="2" y="10" width="4" height="3.5" fill="#c55a11"/><path d="M6.5 1.5 V13.5 M10.5 1.5 V13.5 M1.5 5.5 H14.5 M1.5 9.5 H14.5" stroke="#666666" stroke-width="0.8"/><rect x="7.5" y="8.5" width="9.5" height="8.5" fill="#fff" stroke="#666666" stroke-width="1"/><path d="M9.8 11.5 H14.8 M9.8 14 H14.8 M13.5 10 L11 15.5" stroke="#333" stroke-width="0.9"/></svg>
<svg style="left:474px;top:92px;" width="19" height="19" viewBox="0 0 19 19"><rect x="1.5" y="1.5" width="15.5" height="12.5" fill="#fff" stroke="#6b6b6b" stroke-width="1.1"/><rect x="5.3" y="6" width="3" height="3" fill="#9fd6e6"/><rect x="9.3" y="6" width="3" height="3" fill="#9fd6e6"/><rect x="5.3" y="10" width="3" height="3.5" fill="#9fd6e6"/><path d="M4.8 1.5 V14 M8.8 1.5 V14 M12.8 1.5 V14 M1.5 5.5 H17 M1.5 9.5 H17" stroke="#8a8a8a" stroke-width="0.9"/><path d="M13 11.6 L17.2 5.2 V8.6 L14.6 12.8 Z" fill="#6b6b6b"/><path d="M5.2 16.9 Q7.5 12.4 10.6 11.1 Q13.6 10.4 14.6 13.3 Q13 13.8 12.6 15.8 Q9.5 17.3 5.2 16.9 Z" fill="#1e88c8"/></svg>
<svg style="left:474px;top:115px;" width="19" height="19" viewBox="0 0 19 19"><rect x="1.5" y="1.5" width="15.5" height="12.5" fill="#fff" stroke="#6b6b6b" stroke-width="1.1"/><rect x="5.3" y="5.8" width="8" height="4" fill="#9fd6e6"/><path d="M4.8 1.5 V14 M13.8 1.5 V14 M1.5 5.3 H17 M1.5 10.2 H17" stroke="#8a8a8a" stroke-width="0.9"/><path d="M13 11.6 L17.2 5.2 V8.6 L14.6 12.8 Z" fill="#6b6b6b"/><path d="M5.2 16.9 Q7.5 12.4 10.6 11.1 Q13.6 10.4 14.6 13.3 Q13 13.8 12.6 15.8 Q9.5 17.3 5.2 16.9 Z" fill="#1e88c8"/></svg>
<svg style="left:649px;top:77px;" width="5" height="4" viewBox="0 0 5 4"><path d="M0 0.3 H5 L2.5 3.2 Z" fill="#666666"/></svg>
<svg style="left:653px;top:100px;" width="5" height="4" viewBox="0 0 5 4"><path d="M0 0.3 H5 L2.5 3.2 Z" fill="#666666"/></svg>
<svg style="left:565px;top:123px;" width="5" height="4" viewBox="0 0 5 4"><path d="M0 0.3 H5 L2.5 3.2 Z" fill="#666666"/></svg>
<svg style="left:683px;top:69px;" width="18" height="18" viewBox="0 0 18 18"><path d="M1.5 1.5 H10 V5 H1.5 Z M5.75 1.5 V5" fill="none" stroke="#6b6b6b" stroke-width="1.2"/><path d="M1.5 11 H10 V17 H1.5 Z M5.75 11 V17 M1.5 14 H10 M1.5 5 V7.5" fill="none" stroke="#6b6b6b" stroke-width="1.2"/><rect x="8.5" y="6.5" width="8.5" height="4" fill="#fff" stroke="#6b6b6b" stroke-width="1.1"/><rect x="9.8" y="7.8" width="2.6" height="1.6" fill="#9fd6e6"/><rect x="13.3" y="7.8" width="2.6" height="1.6" fill="#9fd6e6"/><path d="M1.5 8.5 H7" stroke="#1e88c8" stroke-width="2"/><path d="M4.3 5.8 L1.4 8.5 L4.3 11.2" fill="none" stroke="#1e88c8" stroke-width="2"/></svg>
<svg style="left:683px;top:92px;" width="18" height="18" viewBox="0 0 18 18"><path d="M1.5 1.5 H10 V4.5 H1.5 Z M5.75 1.5 V4.5 M1.5 4.5 V7" fill="none" stroke="#6b6b6b" stroke-width="1.2"/><path d="M1.5 10.5 H10 V16.5 H1.5 Z M5.75 10.5 V16.5 M1.5 13.5 H10 M1.5 8 V10.5" fill="none" stroke="#6b6b6b" stroke-width="1.2"/><rect x="4.5" y="6" width="4.5" height="4" fill="#fff" stroke="#6b6b6b" stroke-width="1.1"/><rect x="5.6" y="7.1" width="2.3" height="1.8" fill="#9fd6e6"/><path d="M10 4.5 L16.5 11.5 M16.5 4.5 L10 11.5" stroke="#e8923a" stroke-width="1.6"/></svg>
<svg style="left:683px;top:115px;" width="18" height="18" viewBox="0 0 18 18"><path d="M1.5 1 V4 M16 1 V4 M2 2.5 H15.5" stroke="#1e88c8" stroke-width="1"/><path d="M4 1 L2 2.5 L4 4 M13.5 1 L15.5 2.5 L13.5 4" fill="none" stroke="#1e88c8" stroke-width="1"/><rect x="1.5" y="6" width="14" height="10.5" fill="#fff" stroke="#666666" stroke-width="1"/><path d="M1.5 9.5 H15.5 M1.5 13 H15.5 M6 6 V16.5 M11 6 V16.5" stroke="#666666" stroke-width="0.8"/><rect x="6" y="9.5" width="5" height="3.5" fill="#1e88c8"/></svg>
<svg style="left:761px;top:77px;" width="5" height="4" viewBox="0 0 5 4"><path d="M0 0.3 H5 L2.5 3.2 Z" fill="#666666"/></svg>
<svg style="left:757px;top:100px;" width="5" height="4" viewBox="0 0 5 4"><path d="M0 0.3 H5 L2.5 3.2 Z" fill="#666666"/></svg>
<svg style="left:749px;top:123px;" width="5" height="4" viewBox="0 0 5 4"><path d="M0 0.3 H5 L2.5 3.2 Z" fill="#666666"/></svg>
<svg style="left:794px;top:69px;" width="17" height="17" viewBox="0 0 17 17"><path d="M15.5 4 V1.5 H2 L9 8.5 L2 15.5 H15.5 V13" fill="none" stroke="#444" stroke-width="2"/></svg>
<svg style="left:817px;top:77px;" width="5" height="4" viewBox="0 0 5 4"><path d="M0 0.3 H5 L2.5 3.2 Z" fill="#666666"/></svg>
<svg style="left:830px;top:69px;" width="18" height="18" viewBox="0 0 18 18"><text x="1" y="8" font-family="Liberation Sans" font-size="8.5" font-weight="700" fill="#1e88c8">A</text><text x="1.6" y="17" font-family="Liberation Sans" font-size="9.5" fill="#777">Я</text><path d="M9 6 H16 L13.5 9.5 V13 H11.5 V9.5 Z" fill="#666"/></svg>
<svg style="left:850px;top:77px;" width="5" height="4" viewBox="0 0 5 4"><path d="M0 0.3 H5 L2.5 3.2 Z" fill="#666666"/></svg>
<svg style="left:795px;top:92px;" width="16" height="18" viewBox="0 0 16 18"><rect x="1.5" y="1.5" width="13" height="15" fill="#fff" stroke="#666666" stroke-width="1"/><rect x="1" y="1" width="14" height="3.5" fill="#666666"/><path d="M8 6.5 V13.5" stroke="#1e88c8" stroke-width="2"/><path d="M4.8 10.5 L8 13.8 L11.2 10.5" fill="none" stroke="#1e88c8" stroke-width="2"/></svg>
<svg style="left:815px;top:100px;" width="5" height="4" viewBox="0 0 5 4"><path d="M0 0.3 H5 L2.5 3.2 Z" fill="#666666"/></svg>
<svg style="left:830px;top:94px;" width="15" height="14" viewBox="0 0 15 14"><circle cx="9.5" cy="5" r="3.7" fill="none" stroke="#1e88c8" stroke-width="1.6"/><path d="M6.8 7.8 L1.8 12.6" stroke="#1e88c8" stroke-width="2.2"/></svg>
<svg style="left:850px;top:100px;" width="5" height="4" viewBox="0 0 5 4"><path d="M0 0.3 H5 L2.5 3.2 Z" fill="#666666"/></svg>
<svg style="left:795px;top:116px;" width="16" height="16" viewBox="0 0 16 16"><g transform="rotate(-35 8 8)"><rect x="1" y="5" width="14" height="6.5" rx="1" fill="#f0b37a"/><rect x="1" y="5" width="3" height="6.5" fill="#f5c99e"/><circle cx="10" cy="7" r="0.6" fill="#a0522d"/><circle cx="12" cy="7" r="0.6" fill="#a0522d"/><circle cx="10" cy="9.5" r="0.6" fill="#a0522d"/></g></svg>
<svg style="left:815px;top:123px;" width="5" height="4" viewBox="0 0 5 4"><path d="M0 0.3 H5 L2.5 3.2 Z" fill="#666666"/></svg>
<svg style="left:912px;top:144px;" width="11" height="8" viewBox="0 0 11 8"><path d="M1 6.5 L5.5 2 L10 6.5" fill="none" stroke="#555" stroke-width="1.5"/></svg>
<svg style="left:91px;top:145px;" width="8" height="8" viewBox="0 0 8 8"><path d="M0.5 6 V0.5 H6" fill="none" stroke="#777" stroke-width="1"/><path d="M2.5 2.5 L6.5 6.5 M3.5 6.5 H6.5 V3.5" fill="none" stroke="#777" stroke-width="1"/></svg>
<svg style="left:238px;top:145px;" width="8" height="8" viewBox="0 0 8 8"><path d="M0.5 6 V0.5 H6" fill="none" stroke="#777" stroke-width="1"/><path d="M2.5 2.5 L6.5 6.5 M3.5 6.5 H6.5 V3.5" fill="none" stroke="#777" stroke-width="1"/></svg>
<svg style="left:358px;top:145px;" width="8" height="8" viewBox="0 0 8 8"><path d="M0.5 6 V0.5 H6" fill="none" stroke="#777" stroke-width="1"/><path d="M2.5 2.5 L6.5 6.5 M3.5 6.5 H6.5 V3.5" fill="none" stroke="#777" stroke-width="1"/></svg>
<svg style="left:452px;top:145px;" width="8" height="8" viewBox="0 0 8 8"><path d="M0.5 6 V0.5 H6" fill="none" stroke="#777" stroke-width="1"/><path d="M2.5 2.5 L6.5 6.5 M3.5 6.5 H6.5 V3.5" fill="none" stroke="#777" stroke-width="1"/></svg>
<svg style="left:92px;top:177px;" width="7" height="4" viewBox="0 0 7 4"><path d="M0 0.3 H7 L3.5 3.2 Z" fill="#666666"/></svg>
<div style="left:120px;top:175px;width:2px;height:2px;background:#9a9a9a;"></div>
<div style="left:120px;top:179px;width:2px;height:2px;background:#9a9a9a;"></div>
<div style="left:120px;top:183px;width:2px;height:2px;background:#9a9a9a;"></div>
<svg style="left:149px;top:175px;" width="12" height="11" viewBox="0 0 12 11"><path d="M1 0.8 L10.8 10.2 M10.8 0.8 L1 10.2" stroke="#b4b4b4" stroke-width="1.3"/></svg>
<svg style="left:184px;top:174px;" width="15" height="12" viewBox="0 0 15 12"><path d="M1.2 6.5 L5 10.5 L13.8 1.2" fill="none" stroke="#c4c4c4" stroke-width="2"/></svg>
<svg style="left:219px;top:171px;" width="16" height="17" viewBox="0 0 16 17"><text x="2.8" y="12.8" font-family="Liberation Serif" font-style="italic" font-size="14.5" fill="#4a4a4a" stroke="#4a4a4a" stroke-width="0.35">f</text><text x="8" y="13" font-family="Liberation Serif" font-style="italic" font-size="11.5" fill="#4a4a4a" stroke="#4a4a4a" stroke-width="0.3">x</text></svg>
<svg style="left:914px;top:176px;" width="9" height="7" viewBox="0 0 9 7"><path d="M1 1.2 L4.5 4.8 L8 1.2" fill="none" stroke="#666" stroke-width="1.5"/></svg>
<svg style="left:918px;top:209px;" width="8" height="5" viewBox="0 0 8 5"><path d="M0 4.5 L3.75 0.5 L7.5 4.5 Z" fill="#606060"/></svg>
<svg style="left:918px;top:572px;" width="8" height="5" viewBox="0 0 8 5"><path d="M0 0.5 L3.75 4.5 L7.5 0.5 Z" fill="#606060"/></svg>
<svg style="left:580px;top:592px;" width="6" height="8" viewBox="0 0 6 8"><path d="M5 0 V7.5 L0.8 3.75 Z" fill="#606060"/></svg>
<svg style="left:903px;top:592px;" width="6" height="8" viewBox="0 0 6 8"><path d="M1 0 V7.5 L5.2 3.75 Z" fill="#606060"/></svg>
<svg style="left:25px;top:590px;" width="7" height="9" viewBox="0 0 7 9"><path d="M5.5 0.5 V8 L0.8 4.25 Z" fill="#b8b8b8"/></svg>
<svg style="left:54px;top:590px;" width="7" height="9" viewBox="0 0 7 9"><path d="M0.8 0.5 V8 L5.5 4.25 Z" fill="#b8b8b8"/></svg>
<svg style="left:238px;top:586px;" width="18" height="18" viewBox="0 0 18 18"><circle cx="9" cy="9" r="7.3" fill="none" stroke="#c0c0c0" stroke-width="1.1"/><path d="M9 4.5 V13.5 M4.5 9 H13.5" stroke="#c0c0c0" stroke-width="1.3"/></svg>
<div style="left:559px;top:590px;width:2px;height:2px;background:#a8a8a8;"></div>
<div style="left:559px;top:594px;width:2px;height:2px;background:#a8a8a8;"></div>
<div style="left:559px;top:598px;width:2px;height:2px;background:#a8a8a8;"></div>
<svg style="left:70px;top:612px;" width="16" height="15" viewBox="0 0 16 15"><circle cx="4" cy="3.8" r="3" fill="#444"/><path d="M2.8 8 V13.5 H13.8 V2.5 H8.2" fill="none" stroke="#444" stroke-width="1.1"/><rect x="8.2" y="2" width="5.6" height="2.5" fill="#444"/><rect x="7" y="7" width="2" height="1" fill="#444"/><rect x="10" y="7" width="2" height="1" fill="#444"/><rect x="4" y="9" width="2" height="1" fill="#444"/><rect x="7" y="9" width="2" height="1" fill="#444"/><rect x="10" y="9" width="2" height="1" fill="#444"/><rect x="4" y="11" width="2" height="1" fill="#444"/><rect x="7" y="11" width="2" height="1" fill="#444"/><rect x="10" y="11" width="2" height="1" fill="#444"/></svg>
<svg style="left:644px;top:613px;" width="13" height="13" viewBox="0 0 13 13"><rect x="0" y="0" width="13" height="13" fill="#6e6e6e"/><rect x="1" y="1" width="3" height="3" fill="#e2e2e2"/><rect x="1" y="5" width="3" height="3" fill="#e2e2e2"/><rect x="1" y="9" width="3" height="3" fill="#e2e2e2"/><rect x="5" y="1" width="3" height="3" fill="#e2e2e2"/><rect x="5" y="5" width="3" height="3" fill="#e2e2e2"/><rect x="5" y="9" width="3" height="3" fill="#e2e2e2"/><rect x="9" y="1" width="3" height="3" fill="#e2e2e2"/><rect x="9" y="5" width="3" height="3" fill="#e2e2e2"/><rect x="9" y="9" width="3" height="3" fill="#e2e2e2"/></svg>
<svg style="left:682px;top:613px;" width="14" height="13" viewBox="0 0 14 13"><rect x="0.6" y="0.6" width="12.8" height="11.8" fill="none" stroke="#6e6e6e" stroke-width="1.2"/><rect x="3.6" y="2.6" width="6.8" height="7.8" fill="none" stroke="#6e6e6e" stroke-width="1.2"/><path d="M5 4.5 H9 M5 6.5 H9 M5 8.5 H9" stroke="#6e6e6e" stroke-width="1"/></svg>
<svg style="left:720px;top:613px;" width="14" height="13" viewBox="0 0 14 13"><rect x="0.6" y="0.6" width="12.8" height="11.8" fill="none" stroke="#6e6e6e" stroke-width="1.2"/><path d="M8.5 0.6 V7.5 H0.6 M3.5 0.6 V7.5 M6 0.6 V7.5" fill="none" stroke="#6e6e6e" stroke-width="1.2"/></svg>
<div style="left:751px;top:619px;width:6px;height:2px;background:#606060;"></div>
<div style="left:761px;top:620px;width:100px;height:1px;background:#a0a0a0;"></div>
<div style="left:809px;top:614px;width:5px;height:11px;background:#707070;"></div>
<div style="left:864px;top:619px;width:8px;height:2px;background:#606060;"></div>
<div style="left:867px;top:616px;width:2px;height:8px;background:#606060;"></div>
<svg style="left:11px;top:207px;" width="13" height="13" viewBox="0 0 13 13"><path d="M0.8 12.6 H12.6 V0.8 Z" fill="#b4b4b4"/></svg>
</body></html>
